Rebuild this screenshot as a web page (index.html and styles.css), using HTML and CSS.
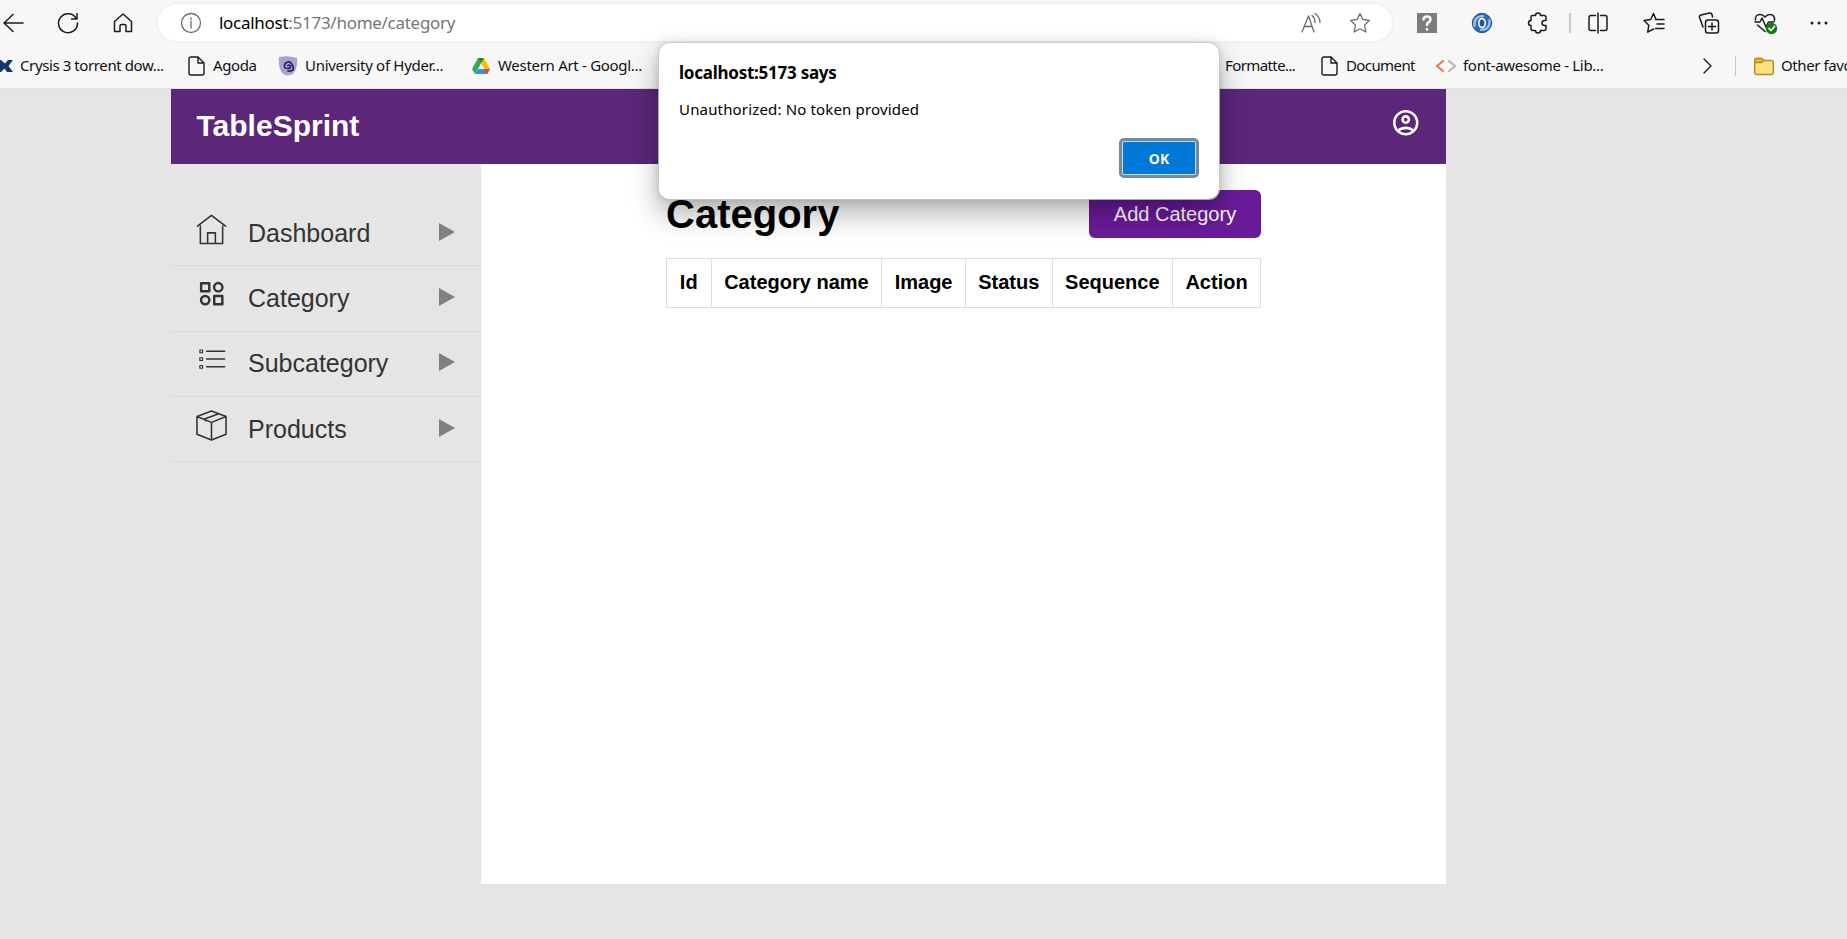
FILE: index.html
```html
<!DOCTYPE html>
<html lang="en">
<head>
<meta charset="utf-8">
<title>TableSprint</title>
<link rel="stylesheet" href="styles.css">
</head>
<body>
<header class="chrome">
  <div class="toolbar">
    <svg class="ic" viewBox="0 0 24 24"><path d="M22 12H3M12 3.500L3 12l9 8.500"/></svg>
    <svg class="ic" viewBox="0 0 24 24"><path d="M20.500 8A9.500 9.500 0 1 0 21.500 12M21 2.500V8H15.500"/></svg>
    <svg class="ic" viewBox="0 0 24 24"><path d="M3.500 10.500L12 3l8.500 7.500V20.500H15V15a1.500 1.500 0 0 0-1.500-1.500h-3A1.500 1.500 0 0 0 9 15v5.500H3.500z"/></svg>
    <div class="address">
      <svg class="ic grey" viewBox="0 0 24 24"><circle cx="12" cy="12" r="9.500"/><path d="M12 10.500V17M12 7v1.600"/></svg>
      <span class="url"><b>localhost</b>:5173/home/category</span>
      <svg class="ic grey read" viewBox="0 0 24 24"><path d="M3 21L9.500 5 15 21M5 15.500h8M13 4.500q3 2.500 3 7M16 2.500q5 3.500 5 9"/></svg>
      <svg class="ic grey" viewBox="0 0 24 24"><path d="M12 2.500l2.800 6 6.700.9-4.900 4.600 1.200 7-5.800-3.300L6.200 21l1.200-7L2.500 9.400l6.700-.9z"/></svg>
    </div>
    <div class="tools">
      <svg class="ic" viewBox="0 0 24 24"><path class="boxgrey" d="M2 2h20v20H2z"/><path class="q" d="M8.500 8.500q0-3 3.500-3T15.500 8.500q0 1.800-2 2.800-1.500.7-1.500 2.700"/><path class="q" d="M12 18.300v.1"/></svg>
      <svg class="ic" viewBox="0 0 24 24"><circle class="blue" cx="12" cy="12" r="9.700"/><path class="swirl" d="M4.500 15Q3.500 5.500 13 5"/><path class="swirl" d="M19.500 9Q20.500 18.500 11 19"/><ellipse class="eye" cx="12" cy="12" rx="3.200" ry="4.500"/></svg>
      <svg class="ic" viewBox="0 0 24 24"><path d="M6.500 4.500h3a2.500 2.500 0 0 1 5 0H18a2 2 0 0 1 2 2V9.500h-1.500a2.500 2.500 0 0 0 0 5H20v3a2 2 0 0 1-2 2h-3.500a2.500 2.500 0 0 1-5 0H7a2 2 0 0 1-2-2v-3a2.500 2.500 0 0 1 0-5V6q0-1.500 1.500-1.500z"/></svg>
      <i class="sep thicker"></i>
      <svg class="ic" viewBox="0 0 24 24"><path d="M9.500 4.500H5a2 2 0 0 0-2 2v11a2 2 0 0 0 2 2h4.500M14.500 4.500H19a2 2 0 0 1 2 2v11a2 2 0 0 1-2 2h-4.500M12 2v20"/></svg>
      <svg class="ic" viewBox="0 0 24 24"><path d="M14 8.500L11.500 2.500 8.700 8.500 2 9.500l4.800 4.700-1.100 7 5.800-3.200M13.500 8.500H22M15 13h7M13.500 17.500H22"/></svg>
      <svg class="ic" viewBox="0 0 24 24"><rect x="8.500" y="9" width="13" height="13" rx="2.500"/><path d="M15 12v7M11.500 15.500h7M6 16L2.500 6.500Q2 4.500 4 4l8.500-2q2-.3 2.500 1.500l.5 2.500"/></svg>
      <svg class="ic heart" viewBox="0 0 24 24"><path d="M2 11h5l2-4 4 9 2.500-5H21M2.500 9Q2 3.500 7 3.500q3 0 5 2.500 2-2.500 5-2.500 5 0 4.500 6M4.500 14L12 20.500"/><circle class="green" cx="18.500" cy="17.500" r="5.700"/><path class="tick" d="M16 17.500l2 2 3.500-4"/></svg>
      <svg class="ic" viewBox="0 0 24 24"><g class="dots"><circle cx="5" cy="12" r="1.500"/><circle cx="12" cy="12" r="1.500"/><circle cx="19" cy="12" r="1.500"/></g></svg>
    </div>
  </div>
  <nav class="bookmarks">
    <a class="bm first"><svg class="bi" viewBox="0 0 20 20"><path class="navy" d="M0 4h7l4 3.500L14 4h5l-4.500 6 4.500 6h-6l-2.500-3.500L7 16H0z"/></svg><span>Crysis 3 torrent dow...</span></a>
    <a class="bm"><svg class="bi" viewBox="0 0 20 20"><path d="M4 1h7l6 6v10q0 2-2 2H4q-2 0-2-2V3q0-2 2-2zM11 1v6h6"/></svg><span>Agoda</span></a>
    <a class="bm uni"><svg class="bi" viewBox="0 0 20 20"><path class="lav" d="M1 1q9-2 18 1 1 10-4 16-7 3-11-1-4-6-3-16z"/><path class="spiral" d="M10 9.500q2-1 2.500 1T9.500 12.500 6.500 9.500 10 6t5 4.500-5 4.500"/></svg><span>University of Hyder...</span></a>
    <a class="bm drive"><svg class="bi" viewBox="0 0 20 20"><path class="dg" d="M7 2h6L4 18 1 13z"/><path class="dy" d="M7 2h6l6 11h-6z"/><path class="db" d="M4 18l3-5h12l-3 5z"/><path class="dr" d="M13.500 13H19l-3 5z"/><path class="dk" d="M7 2h6l-3 5z"/></svg><span>Western Art - Googl...</span></a>
    <a class="bm fmt"><svg class="bi" viewBox="0 0 20 20"><path d="M3 5h16v10H3z"/></svg><span>Formatte...</span></a>
    <a class="bm doc"><svg class="bi" viewBox="0 0 20 20"><path d="M4 1h7l6 6v10q0 2-2 2H4q-2 0-2-2V3q0-2 2-2zM11 1v6h6"/></svg><span>Document</span></a>
    <a class="bm code"><svg class="bi" viewBox="0 0 20 20"><path class="or" d="M7 5l-6 5 6 5"/><path class="gr" d="M13 5l6 5-6 5"/></svg><span>font-awesome - Lib...</span></a>
    <svg class="bi" viewBox="0 0 20 20"><path d="M2 3l7 7-7 7"/></svg>
    <i class="sep"></i>
    <a class="bm other"><svg class="bi" viewBox="0 0 20 20"><path class="fold" d="M.7 4.500q0-2 2-2h5l2 2h7.600q2 0 2 2v10q0 2-2 2H2.700q-2 0-2-2z"/><path class="flap" d="M.7 6.500v-2q0-2 2-2h5l2 2-2 2z"/></svg><span>Other favorites</span></a>
  </nav>
</header>
<div class="app">
  <div class="navbar">
    <div class="brand">TableSprint</div>
    <svg class="user" viewBox="2 2 20 20"><path d="M12 2C6.480 2 2 6.480 2 12s4.480 10 10 10 10-4.480 10-10S17.520 2 12 2zM7.350 18.500C8.660 17.560 10.260 17 12 17s3.340.560 4.650 1.500C15.340 19.440 13.740 20 12 20s-3.340-.560-4.650-1.500zm10.790-1.380C16.450 15.800 14.320 15 12 15s-4.450.8-6.140 2.120C4.700 15.730 4 13.950 4 12c0-4.420 3.580-8 8-8s8 3.580 8 8c0 1.950-.7 3.730-1.860 5.120zM12 6c-1.930 0-3.500 1.570-3.500 3.500S10.070 13 12 13s3.500-1.570 3.500-3.500S13.930 6 12 6zm0 5c-.83 0-1.500-.67-1.500-1.500S11.170 8 12 8s1.500.67 1.500 1.500S12.830 11 12 11z"/></svg>
  </div>
  <div class="body">
    <aside class="side">
      <a class="item"><svg class="si" viewBox="0 0 32 32"><path d="M1.500 12.500L16 1.500l14.500 11M4.500 12.500V30.500h23V12.500M12 30V19.500h8v11"/></svg><span>Dashboard</span><svg class="tri" viewBox="0 0 16 18"><path d="M0 0l16 9-16 9z"/></svg></a>
      <a class="item"><svg class="si thick" viewBox="0 0 32 32"><rect x="5.300" y="4.300" width="8.400" height="8.400"/><circle cx="23" cy="8.500" r="4.300"/><circle cx="9.500" cy="21.800" r="4.300"/><rect x="18.800" y="17.600" width="8.400" height="8.400"/></svg><span>Category</span><svg class="tri" viewBox="0 0 16 18"><path d="M0 0l16 9-16 9z"/></svg></a>
      <a class="item"><svg class="si" viewBox="0 0 32 32"><path d="M11 6.500H29.500M11 14.500H29.500M11 22.500H29.500"/><path class="fine" d="M4 5.200h2.800v2.800H4zM4 13.200h2.800v2.800H4zM4 21.200h2.800v2.800H4z"/></svg><span>Subcategory</span><svg class="tri" viewBox="0 0 16 18"><path d="M0 0l16 9-16 9z"/></svg></a>
      <a class="item"><svg class="si" viewBox="0 0 32 32"><path d="M16 1L31 6.800V25L16 31 1 25V6.800zM1 6.800L16 12.800 31 6.800M16 12.800V31M8 9.500L23.500 3.800M8.500 9.800L10 11"/></svg><span>Products</span><svg class="tri" viewBox="0 0 16 18"><path d="M0 0l16 9-16 9z"/></svg></a>
    </aside>
    <main class="main">
      <div class="panel">
        <div class="head"><h1>Category</h1><button class="add">Add Category</button></div>
        <table>
          <tr><th class="id">Id</th><th>Category name</th><th>Image</th><th>Status</th><th>Sequence</th><th>Action</th></tr>
        </table>
      </div>
    </main>
  </div>
</div>
<div class="dialog">
  <div class="title">localhost:5173 says</div>
  <div class="msg">Unauthorized: No token provided</div>
  <button class="ok">OK</button>
</div>
</body>
</html>
```
FILE: styles.css
```css
* { box-sizing: border-box; }
body { margin: 0; width: 1847px; height: 939px; overflow: hidden; background: #e5e5e5; font-family: "Liberation Sans", Arial, sans-serif; }
svg { display: block; flex: none; fill: none; }
.chrome { height: 89px; background: #f7f7f7; border-bottom: 1px solid #e2e2e2; font-family: "Noto Sans", "Open Sans", sans-serif; color: #111; }
.toolbar { display: flex; align-items: center; height: 45px; padding-left: 1px; }
.ic { width: 24px; height: 24px; stroke: #1b1b1b; stroke-width: 1.500; stroke-linejoin: round; stroke-linecap: round; }
.toolbar > .ic { margin-right: 31px; }
.toolbar > .ic + .ic + .ic { margin-right: 23px; }
.toolbar .grey { stroke: #6b6b6b; stroke-width: 1.300; }
.address { display: flex; align-items: center; width: 1234px; height: 37px; padding: 0 20px 0 21px; border-radius: 19px; background: #fff; box-shadow: 0 0 4px rgba(0,0,0,.07); }
.url { flex: 1; margin-left: 16px; font-size: 17px; letter-spacing: -.28px; color: #767676; white-space: nowrap; }
.url b { font-weight: 400; color: #000; }
.read { margin-right: 25px; }
.tools { display: grid; flex: 1; align-items: center; grid-template-columns: 55px 56px 43px 17px 56px 55px 56px 54px 30px; padding-left: 23px; }
.sep { width: 1px; height: 20px; background: #c8c8c8; }
.thicker { width: 2px; }
.boxgrey { fill: #7c7c7c; stroke: none; }
.q { stroke: #fff; stroke-width: 2.600; }
.blue { fill: #2f6bb0; stroke: #1f5396; stroke-width: 1; }
.swirl { stroke: #9cc4ec; stroke-width: 2.200; }
.eye { fill: #1f5396; stroke: #e6f1fb; stroke-width: 1.800; }
.green { fill: #107c10; stroke: none; }
.tick { stroke: #fff; stroke-width: 1.700; }
.heart { overflow: visible; }
.dots { fill: #1b1b1b; stroke: none; }
.bookmarks { display: grid; align-items: center; height: 42px; grid-template-columns: 187px 91px 193px 727px 122px 116px 266px 33px 19px 93px; }
.bm { display: flex; align-items: center; gap: 7px; font-size: 15px; letter-spacing: -.4px; white-space: nowrap; overflow: hidden; }
.bm span { margin-top: -2px; }
.bi { width: 20px; height: 20px; stroke: #1b1b1b; stroke-width: 1.400; stroke-linejoin: round; stroke-linecap: round; }
.first { margin-left: -6px; gap: 6px; }
.uni, .drive, .code { letter-spacing: -.3px; }
.bm + .bm:nth-child(2) { gap: 6px; }
.doc { gap: 6px; letter-spacing: -.6px; }
.fmt { letter-spacing: -.6px; }
.navy { fill: #12376b; stroke: none; }
.lav { fill: #aaa3cb; stroke: none; }
.spiral { stroke: #2d1f6b; stroke-width: 1.700; }
.dg { fill: #34a853; stroke: none; }
.dy { fill: #fbbc04; stroke: none; }
.db { fill: #4285f4; stroke: none; }
.dr { fill: #ea4335; stroke: none; }
.dk { fill: #188038; stroke: none; }
.or { stroke: #e8734a; stroke-width: 2; }
.gr { stroke: #b5b5b5; stroke-width: 2; }
.fold { fill: #ffdf85; stroke: #b98a1c; }
.flap { fill: #e9b92c; stroke: #b98a1c; }
.app { width: 1275px; margin-left: 171px; }
.navbar { display: flex; align-items: center; justify-content: space-between; height: 75px; padding: 0 27.500px 7px 25.500px; background: #5c267b; }
.brand { padding-top: 6px; font-size: 30px; font-weight: 700; color: #fff; }
.user { width: 25.500px; height: 25.500px; fill: #fff; }
.body { display: flex; height: 720px; }
.side { width: 310px; padding-top: 37px; }
.item { display: flex; align-items: center; height: 65.300px; padding: 0 26px 0 25px; border-bottom: 1px solid #dadada; font-size: 25px; color: #333; }
.item span { flex: 1; margin-left: 21px; }
.si { width: 31px; height: 31px; margin-bottom: 7px; stroke: #333; stroke-width: 1.600; stroke-linejoin: round; stroke-linecap: round; }
.thick { stroke-width: 2.500; }
.fine { stroke-width: 1.200; }
.tri { width: 16px; height: 18px; margin-bottom: 3px; fill: #808080; }
.main { flex: 1; padding: 26px 185px 0; background: #fff; }
.panel { width: 595px; }
.head { display: flex; align-items: center; justify-content: space-between; height: 48px; margin-bottom: 20px; }
h1 { margin: 0; font-size: 40px; line-height: 46px; }
.add { width: 172px; height: 48px; padding: 0; border: 0; border-radius: 6px; background: #6a1b9a; color: #fff; font: 20px "Liberation Sans", Arial, sans-serif; }
table { width: 595px; height: 50px; border-collapse: collapse; }
th { padding: 0 12px 2px; border: 1px solid #ddd; font-size: 20px; white-space: nowrap; }
.id { width: 44.500px; }
.dialog { position: absolute; left: 658px; top: 42px; width: 562px; height: 158px; padding: 16px 20px; border: 1px solid rgba(200,200,200,.8); border-radius: 11px; background: #fff; background-clip: padding-box; box-shadow: 0 14px 28px rgba(0,0,0,.3), 0 0 8px rgba(0,0,0,.12); font-family: "Noto Sans", "Open Sans", sans-serif; color: #000; }
.title { font-size: 17px; font-weight: 700; line-height: 28px; letter-spacing: -.25px; }
.msg { margin-top: 9px; font-size: 15px; line-height: 26px; letter-spacing: .16px; }
.ok { display: block; width: 74px; height: 34px; margin: 19px 3px 0 auto; padding: 0; border: 1px solid #bfe0f7; border-radius: 2px; background: #0078d7; outline: 3px solid #75899b; color: #fff; font: 700 14px "Noto Sans", sans-serif; }
```
